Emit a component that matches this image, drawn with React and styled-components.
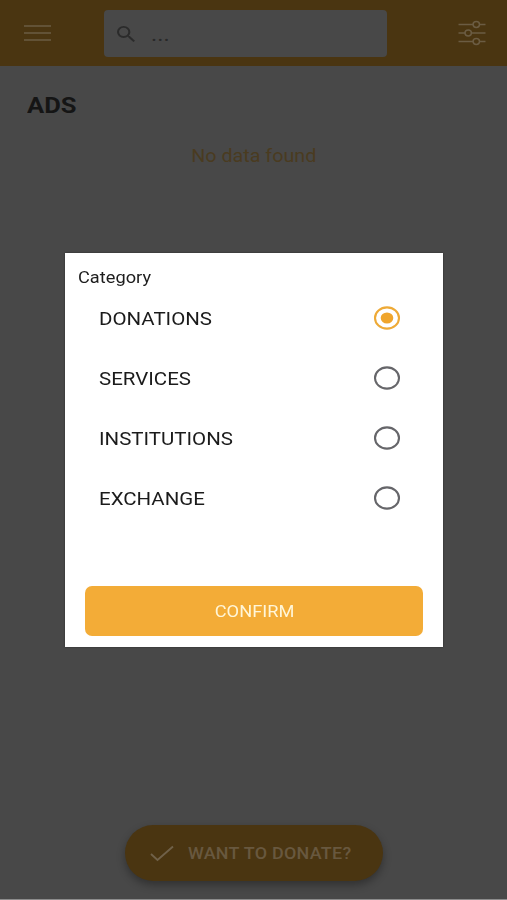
import React, { useState } from "react";
import styled, { createGlobalStyle } from "styled-components";

const GlobalStyle = createGlobalStyle`
  * { box-sizing: border-box; }
  body { margin: 0; background: #484848; font-family: Roboto, sans-serif; }
  button { font: inherit; border: 0; padding: 0; margin: 0; background: none; }
`;

const Screen = styled.div`
  width: 507px;
  height: 900px;
  display: flex;
  flex-direction: column;
  background: #484848;
  border-bottom: 1px solid #8c8c8c;
  overflow: hidden;
`;

const Text = styled.span`
  display: inline-block;
  white-space: nowrap;
  font-size: ${(p) => p.$size}px;
  font-weight: ${(p) => p.$weight || 400};
  letter-spacing: ${(p) => p.$spacing || 0}px;
  line-height: 24px;
  color: ${(p) => p.$color};
  transform: scaleX(1.12);
  transform-origin: ${(p) => p.$origin || "left"} center;
`;

const Header = styled.header`
  height: 66px;
  flex: none;
  display: flex;
  align-items: center;
  justify-content: space-between;
  padding: 0 20px 0 23px;
  background: #4a3511;
`;

const IconButton = styled.button`
  display: flex;
  color: #6b5c43;
`;

const Search = styled.div`
  width: 283px;
  height: 47px;
  margin-left: 35px;
  margin-right: 53px;
  display: flex;
  align-items: center;
  gap: 16px;
  padding: 1px 0 0 13px;
  border-radius: 4px;
  background: #484848;
`;

const Main = styled.main`
  flex: 1;
  display: flex;
  flex-direction: column;
  padding: 28px 27px 0;
`;

const Heading = styled.h1`
  margin: 0;
  height: 24px;
  line-height: 24px;
  display: flex;
`;

const Empty = styled.p`
  margin: 26px 0 0;
  height: 24px;
  display: flex;
  justify-content: center;
`;

const Footer = styled.footer`
  flex: none;
  display: flex;
  justify-content: center;
  padding-bottom: 18px;
`;

const DonateButton = styled.button`
  width: 258px;
  height: 56px;
  display: flex;
  align-items: center;
  gap: 13px;
  padding: 2px 0 0 24px;
  border-radius: 28px;
  background: #4a3511;
  box-shadow: 0 4px 8px rgba(0, 0, 0, 0.32);
`;

const Overlay = styled.div`
  position: fixed;
  left: 0;
  top: 0;
  width: 507px;
  height: 900px;
  display: flex;
  align-items: center;
  justify-content: center;
`;

const Dialog = styled.section`
  width: 378px;
  height: 394px;
  display: flex;
  flex-direction: column;
  padding: 13px 20px 11px 13px;
  background: #fff;
  box-shadow: 0 0 2px rgba(0, 0, 0, 0.4);
`;

const Options = styled.div`
  flex: 1;
  padding-left: 21px;
`;

const Option = styled.label`
  height: 60.3px;
  display: flex;
  align-items: flex-start;
  justify-content: space-between;
  padding: 16.6px 22px 0 0;
`;

const RadioInput = styled.input`
  position: absolute;
  opacity: 0;
`;

const RadioIcon = styled.svg`
  flex: none;
  margin-top: -1px;
`;

const Confirm = styled.button`
  height: 50px;
  margin-left: 7px;
  padding: 2px 0 0 2px;
  border-radius: 7px;
  background: #f3ac37;
`;

const MenuIcon = () => (
  <svg width="29" height="20" viewBox="0 0 29 20" stroke="currentColor" strokeWidth="1.7">
    <path d="M1 3h27M1 10h27M1 17h27" />
  </svg>
);

const SearchIcon = () => (
  <svg width="18" height="16" viewBox="3 3 17.5 17.5" preserveAspectRatio="none" fill="#2b2b2b">
    <path d="M15.5 14h-.79l-.28-.27A6.471 6.471 0 0 0 16 9.5 6.5 6.5 0 1 0 9.5 16c1.61 0 3.09-.59 4.23-1.57l.27.28v.79l5 4.99L20.49 19l-4.99-5zm-6 0C7.01 14 5 11.99 5 9.5S7.01 5 9.5 5 14 7.01 14 9.5 11.99 14 9.5 14z" />
  </svg>
);

const FilterIcon = () => (
  <svg width="30" height="28" viewBox="0 0 30 28" fill="none" stroke="currentColor" strokeWidth="1.5">
    <path d="M1.5 5.500H12.200M18.800 5.500H28.500M1.500 14H8M14.500 14H28.500M1.500 23H16M22.500 23H28.500" stroke="none" />
    <path d="M1.5 5.500H16M22.500 5.500H28.500M1.500 14H8M14.500 14H28.500M1.500 22.500H16M22.500 22.500H28.500" />
    <ellipse cx="19.3" cy="5.500" rx="3.2" ry="2.900" />
    <ellipse cx="11.2" cy="14" rx="3.2" ry="2.900" />
    <ellipse cx="19.3" cy="22.500" rx="3.2" ry="2.900" />
  </svg>
);

const CheckIcon = () => (
  <svg width="26" height="18" viewBox="0 0 26 18" fill="none" stroke="#706149" strokeWidth="1.9">
    <path d="M2 9l6.5 6L24 1.5" />
  </svg>
);

const RadioMark = ({ checked }) => (
  <RadioIcon width="28" height="24" viewBox="0 0 28 24" fill="none">
    <ellipse cx="14" cy="12" rx="12" ry="10.6" stroke={checked ? "#eeaa37" : "#66666a"} strokeWidth="2.1" />
    {checked && <ellipse cx="14" cy="12" rx="6.3" ry="5.6" fill="#f0a52b" />}
  </RadioIcon>
);

const categories = ["DONATIONS", "SERVICES", "INSTITUTIONS", "EXCHANGE"];

export default function App() {
  const [selected, setSelected] = useState("DONATIONS");
  return (
    <>
      <GlobalStyle />
      <Screen>
        <Header>
          <IconButton aria-label="Menu"><MenuIcon /></IconButton>
          <Search>
            <SearchIcon />
            <Text $size={21} $color="#292929">...</Text>
          </Search>
          <IconButton aria-label="Filters"><FilterIcon /></IconButton>
        </Header>
        <Main>
          <Heading><Text $size={22.8} $weight={700} $color="#151515">ADS</Text></Heading>
          <Empty><Text $size={17.6} $origin="center" $color="#4a3b20">No data found</Text></Empty>
        </Main>
        <Footer>
          <DonateButton>
            <CheckIcon />
            <Text $size={16} $weight={500} $spacing={0.25} $color="#68583f">WANT TO DONATE?</Text>
          </DonateButton>
        </Footer>
      </Screen>
      <Overlay>
        <Dialog role="dialog" aria-label="Category">
          <Text $size={16.3} $color="#1d1d1d">Category</Text>
          <Options>
            {categories.map((name) => (
              <Option key={name}>
                <Text $size={18.3} $color="#1b1b1b">{name}</Text>
                <RadioInput
                  type="radio"
                  name="category"
                  checked={selected === name}
                  onChange={() => setSelected(name)}
                />
                <RadioMark checked={selected === name} />
              </Option>
            ))}
          </Options>
          <Confirm><Text $size={16.3} $origin="center" $color="#fff6d8">CONFIRM</Text></Confirm>
        </Dialog>
      </Overlay>
    </>
  );
}
